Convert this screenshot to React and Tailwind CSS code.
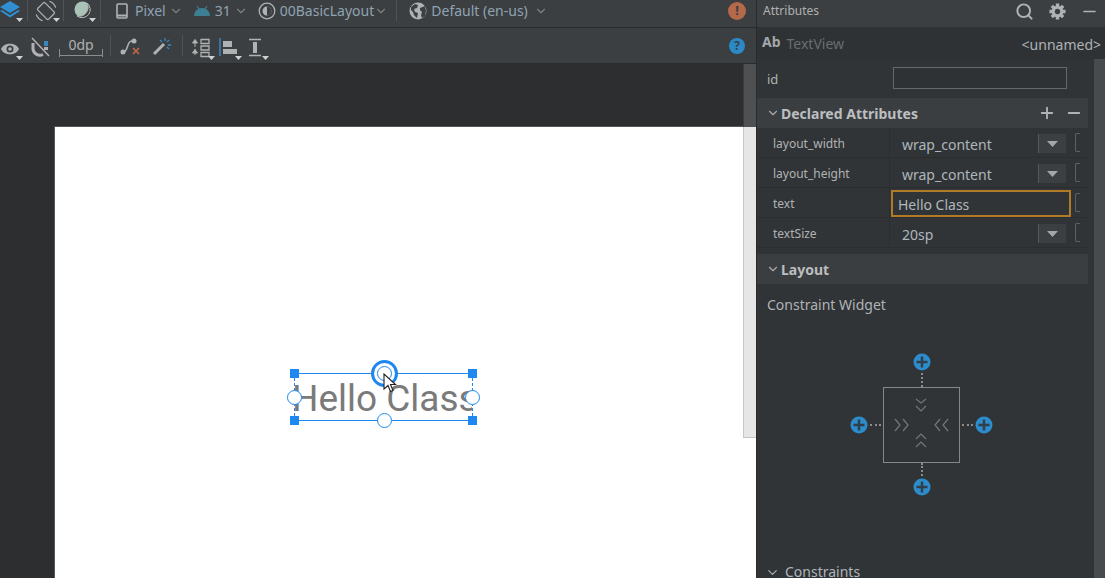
import { ChevronDown, Search, Plus, Minus } from "lucide-react";

const Caret = ({ className = "" }) => (
  <svg width="7" height="4" viewBox="0 0 7 4" className={`absolute ${className}`}>
    <path d="M0 0h7L3.500 4z" fill="#d0d0d0" />
  </svg>
);

const Sep = ({ h = "h-[21px]" }) => <div className={`w-px ${h} bg-[#505354] self-start`} />;

function TopBar() {
  return (
    <div className="h-[28px] bg-[#3c3f41] border-b border-[#2b2b2b] flex items-center relative pb-[6px] text-[14px] text-[#8fa3b3]">
      <div className="w-[27px] h-[27px] relative shrink-0 self-start">
        <svg width="22" height="22" viewBox="0 0 22 22" className="absolute left-0 top-0">
          <path d="M10 1l10 6-10 6L0 7z" fill="#2f8fd0" />
          <path d="M0 11l2-1 8 5 8-5 2 1-10 6.500z" fill="#2f8fd0" />
        </svg>
        <Caret className="left-[16px] top-[18px]" />
      </div>
      <Sep />
      <div className="w-[35px] h-[27px] relative shrink-0 self-start">
        <svg width="22" height="22" viewBox="0 0 26 26" className="absolute left-[7px] top-0" fill="none" stroke="#afb1b3" strokeWidth="1.500">
          <rect x="7" y="4" width="12" height="18" rx="1.500" transform="rotate(-45 13 13)" />
          <path d="M17 1.500a12 12 0 0 1 7.500 7.500M1.500 17a12 12 0 0 0 7.500 7.500" />
        </svg>
        <Caret className="left-[25px] top-[18px]" />
      </div>
      <Sep />
      <div className="w-[36px] h-[27px] relative shrink-0 self-start">
        <svg width="20" height="20" viewBox="0 0 20 20" className="absolute left-[9px] top-0">
          <circle cx="9.500" cy="9.500" r="8" fill="#a9c4b6" />
          <path d="M14 3a8 8 0 0 1-10 13a9 9 0 0 0 10-13z" fill="#3c3f41" stroke="#afb1b3" strokeWidth="1" />
        </svg>
        <Caret className="left-[25px] top-[18px]" />
      </div>
      <Sep />
      <svg width="12" height="16" viewBox="0 0 12 16" className="ml-[15px] shrink-0">
        <rect x="1" y="1" width="10" height="14" rx="1" fill="none" stroke="#afb1b3" strokeWidth="1.600" />
        <path d="M1 12.500h10" stroke="#afb1b3" strokeWidth="2" />
      </svg>
      <span className="ml-[7px] leading-none">Pixel</span>
      <ChevronDown size={14} className="text-[#7c8083] ml-[3px]" />
      <svg width="16" height="10" viewBox="0 0 16 10" className="ml-[11px]">
        <path d="M0 10a8 8 0 0 1 16 0z" fill="#3f7f93" />
        <path d="M3 0l2 3M13 0l-2 3" stroke="#3f7f93" strokeWidth="1.200" />
      </svg>
      <span className="ml-[5px] leading-none">31</span>
      <ChevronDown size={14} className="text-[#7c8083] ml-[3px]" />
      <svg width="18" height="18" viewBox="0 0 18 18" className="ml-[10px]">
        <circle cx="9" cy="9" r="7.800" fill="none" stroke="#afb1b3" strokeWidth="1.300" />
        <circle cx="9" cy="9" r="4.500" fill="#afb1b3" />
        <path d="M9 4.500a4.500 4.500 0 0 1 0 9z" fill="#3c3f41" />
      </svg>
      <span className="ml-[4px] leading-none">00BasicLayout</span>
      <ChevronDown size={14} className="text-[#7c8083]" />
      <div className="ml-[8px] self-start"><Sep /></div>
      <svg width="18" height="18" viewBox="0 0 18 18" className="ml-[12px] shrink-0">
        <circle cx="9" cy="9" r="8.500" fill="#afb1b3" />
        <path d="M2 5l4-3 3 1-1 3-3 1 1 3 3 1-1 5-3-3-1-3-2-2zM11 6l5-2 1 5-1 5-3 2-1-3 1-3-2-2z" fill="#3c3f41" />
      </svg>
      <span className="ml-[4px] leading-none">Default (en-us)</span>
      <ChevronDown size={14} className="text-[#7c8083] ml-[6px]" />
      <div className="ml-auto mr-[10px] w-[18px] h-[18px] rounded-full bg-[#b4694a] text-[#3c3f41] font-bold text-[13px] flex items-center justify-center leading-none">!</div>
    </div>
  );
}

function SecondBar() {
  return (
    <div className="h-[36px] bg-[#3c3f41] border-b border-[#2b2b2b] flex items-center relative pt-[2px] text-[14px] text-[#afb1b3]">
      <div className="w-[24px] h-[35px] relative shrink-0 self-start">
        <svg width="20" height="14" viewBox="0 0 20 14" className="absolute left-0 top-[12px]">
          <path d="M1 7c3-7 15-7 18 0c-3 7-15 7-18 0z" fill="#afb1b3" />
          <circle cx="10" cy="7" r="3.500" fill="#3c3f41" />
          <circle cx="10" cy="7" r="1.800" fill="#afb1b3" />
        </svg>
        <Caret className="left-[16px] top-[26px]" />
      </div>
      <svg width="20" height="20" viewBox="0 0 20 20" className="ml-[7px] shrink-0">
        <path d="M2 6v6a7 7 0 0 0 10 5.500" fill="none" stroke="#afb1b3" strokeWidth="3" />
        <path d="M1 1l17 18" stroke="#afb1b3" strokeWidth="1.500" />
        <path d="M13 4h4v5h-4z" fill="#3a87c0" />
        <path d="M13 10h4v3h-4z" fill="#afb1b3" />
      </svg>
      <div className="ml-[8px] w-[44px] h-[18px] relative shrink-0 text-center leading-[14px] text-[#afb1b3] border-b border-[#8a8d8f]">
        0dp
        <div className="absolute left-0 bottom-[-2px] w-px h-[8px] bg-[#8a8d8f]" />
        <div className="absolute right-0 bottom-[-2px] w-px h-[8px] bg-[#8a8d8f]" />
      </div>
      <div className="ml-[7px] self-start mt-[5px]"><Sep /></div>
      <svg width="22" height="20" viewBox="0 0 22 20" className="ml-[9px] shrink-0">
        <path d="M3 15c6 0 3-11 9-11" fill="none" stroke="#afb1b3" strokeWidth="1.500" />
        <circle cx="3" cy="15" r="2.500" fill="#afb1b3" />
        <circle cx="14" cy="4" r="2.500" fill="#afb1b3" />
        <path d="M13 11l6 6M19 11l-6 6" stroke="#c0694a" strokeWidth="1.700" />
      </svg>
      <svg width="20" height="20" viewBox="0 0 20 20" className="ml-[10px] shrink-0">
        <path d="M2 17L12 7" stroke="#afb1b3" strokeWidth="3" />
        <path d="M13 1v3M17 3l-2 2M19 8h-3M8 3l2 2M17 12l-2-2" stroke="#3a87c0" strokeWidth="1.300" />
      </svg>
      <div className="ml-[10px] self-start mt-[5px]"><Sep /></div>
      <div className="w-[27px] h-[35px] relative ml-[8px] shrink-0 self-start">
        <svg width="20" height="20" viewBox="0 0 20 20" className="absolute left-0 top-[8px]">
          <path d="M4 9V4M1.500 5L4 1.500 6.500 5zM4 11v6M1.500 15L4 11.500 6.500 15z" fill="#afb1b3" stroke="#afb1b3" strokeWidth="1" />
          <path d="M10 1.500h8v4h-8zM10 8h8v4h-8zM10 14.500h8v4h-8z" fill="none" stroke="#afb1b3" strokeWidth="1.300" />
        </svg>
        <Caret className="left-[17px] top-[26px]" />
      </div>
      <div className="w-[30px] h-[35px] relative shrink-0 self-start">
        <svg width="20" height="20" viewBox="0 0 20 20" className="absolute left-[1px] top-[8px]">
          <path d="M1 0v18" stroke="#3a87c0" strokeWidth="1.500" />
          <path d="M4 3h9v6H4z" fill="#afb1b3" />
          <path d="M4 11h14v5H4z" fill="#afb1b3" />
        </svg>
        <Caret className="left-[17px] top-[26px]" />
      </div>
      <div className="w-[24px] h-[35px] relative shrink-0 self-start">
        <svg width="16" height="20" viewBox="0 0 16 20" className="absolute left-0 top-[8px]">
          <path d="M1 1.500h12M1 17.500h12" stroke="#afb1b3" strokeWidth="1.500" />
          <path d="M5 4h4v11H5z" fill="#afb1b3" />
        </svg>
        <Caret className="left-[14px] top-[26px]" />
      </div>
      <div className="absolute right-[11px] top-[10px] w-[16px] h-[16px] rounded-full bg-[#2a8ac8] text-[#3c3f41] font-bold text-[12px] flex items-center justify-center leading-none">?</div>
    </div>
  );
}

const Handle = ({ className }) => (
  <div className={`absolute w-[15px] h-[15px] rounded-full bg-white border border-[#1e88f0] ${className}`} />
);
const Corner = ({ className }) => (
  <div className={`absolute w-[9px] h-[9px] bg-[#1e88f0] ${className}`} />
);

function Canvas() {
  return (
    <div className="flex-1 bg-[#2d2e30] relative overflow-hidden pt-[62px] pl-[54px]">
      <div className="h-[500px] bg-white border-t border-l border-[#55585a] relative">
        {/* selected text view, offsets are relative to the design surface */}
        <div className="absolute left-[239px] top-[246px] w-[178px] h-[48px] border-y border-[#1e88f0] overflow-hidden">
          <div className="absolute left-[-2px] top-[3px] text-[37px] leading-[44px] whitespace-nowrap text-[#7a7a7a] font-['Roboto',sans-serif]">Hello Class</div>
        </div>
        <div className="absolute left-[239px] top-[246px] h-[48px] w-0 border-l border-dashed border-[#1e88f0]" />
        <div className="absolute left-[417px] top-[246px] h-[48px] w-0 border-l border-dashed border-[#1e88f0]" />
        <Corner className="left-[235px] top-[242px]" />
        <Corner className="left-[413px] top-[242px]" />
        <Corner className="left-[235px] top-[289px]" />
        <Corner className="left-[413px] top-[289px]" />
        <Handle className="left-[232px] top-[263px]" />
        <Handle className="left-[410px] top-[263px]" />
        <Handle className="left-[322px] top-[286px]" />
        <div className="absolute left-[316px] top-[233px] w-[27px] h-[27px] rounded-full bg-white border-[3px] border-[#1e88f0] flex items-center justify-center">
          <div className="w-[15px] h-[15px] rounded-full border border-[#1e88f0]" />
        </div>
        <svg width="16" height="22" viewBox="0 0 16 22" className="absolute left-[328px] top-[246px]">
          <path d="M1 1v15l4-3.500 2.500 6 2.500-1-2.500-6h5z" fill="#fff" stroke="#222" strokeWidth="1.100" />
        </svg>
      </div>
      <div className="absolute right-0 top-0 w-[13px] h-[374px] bg-[#4e5052] border-l border-[#3a3c3e]" />
      <div className="absolute right-0 top-[63px] w-[13px] h-[311px] bg-[#e6e6e6] border-l border-b border-[#c6c6c6]" />
    </div>
  );
}

function Row({ name, value, dropdown, focus }) {
  return (
    <div className="h-[30px] border-b border-[#2b2d2f] flex relative">
      <div className="w-[133px] border-r border-[#2b2d2f] pl-[16px] text-[12px] text-[#b0b3b5] leading-[31px] shrink-0">{name}</div>
      {focus ? (
        <div className="w-[180px] h-[27px] mt-[2px] ml-px border-2 border-[#b07a26] pl-[5px] text-[14px] leading-[25px] text-[#b0b8bf] shrink-0">{value}</div>
      ) : (
        <div className="w-[181px] pl-[12px] text-[14px] leading-[34px] text-[#aeb6bc] relative shrink-0">
          {value}
          {dropdown && (
            <div className="absolute left-[148px] top-[6px] w-[28px] h-[19px] bg-[#3c3f41] border-l border-[#55585a] flex items-center justify-center">
              <svg width="11" height="6" viewBox="0 0 11 6"><path d="M0 0h11L5.500 6z" fill="#a4a7a9" /></svg>
            </div>
          )}
        </div>
      )}
      <div className="ml-[4px] mt-[5px] w-[5px] h-[19px] border border-[#5d6062] rounded-l-[2px] border-r-0" />
    </div>
  );
}

const SectionHead = ({ title, children }) => (
  <div className="h-[30px] bg-[#3b3e40] flex items-center pl-[9px] text-[14px] font-bold text-[#bcbec0]">
    <ChevronDown size={14} className="text-[#a8abad] mr-px" />
    {title}
    {children}
  </div>
);

const PlusDot = () => (
  <svg width="18" height="18" viewBox="0 0 18 18" className="shrink-0">
    <circle cx="9" cy="9" r="8.500" fill="#2d8ccb" />
    <path d="M9 3.500v11M3.500 9h11" stroke="#313f4b" strokeWidth="2.500" />
  </svg>
);

function ConstraintWidget() {
  return (
    <div className="w-[143px] flex flex-col items-center mt-[38px] ml-[93px]">
      <PlusDot />
      <div className="h-[14px] w-0 border-l-2 border-dotted border-[#8a8d8f] mt-[2px]" />
      <div className="flex items-center">
        <PlusDot />
        <div className="w-[11px] h-0 border-t-2 border-dotted border-[#8a8d8f] mx-[2px]" />
        <div className="w-[77px] h-[76px] border border-[#85888a] shrink-0">
          <svg width="75" height="74" viewBox="0 0 75 74" fill="none" stroke="#74777a" strokeWidth="1.200">
            <path d="M32 11l5 4 5-4M32 18l5 5 5-5" />
            <path d="M32 51l5-5 5 5M32 59l5-5 5 5" />
            <path d="M11 31l5 6-5 6M19 31l5 6-5 6" />
            <path d="M64 31l-5 6 5 6M56 31l-5 6 5 6" />
          </svg>
        </div>
        <div className="w-[11px] h-0 border-t-2 border-dotted border-[#8a8d8f] mx-[2px]" />
        <PlusDot />
      </div>
      <div className="h-[13px] w-0 border-l-2 border-dotted border-[#8a8d8f] mb-[2px]" />
      <PlusDot />
    </div>
  );
}

const Gear = () => (
  <svg width="17" height="17" viewBox="0 0 18 18" className="ml-[15px] shrink-0">
    <g stroke="#afb1b3" strokeWidth="3.600">
      <path d="M9 0.500v17M0.500 9h17M3 3l12 12M15 3L3 15" />
    </g>
    <circle cx="9" cy="9" r="6.200" fill="#afb1b3" />
    <circle cx="9" cy="9" r="2.800" fill="#3c3f41" />
  </svg>
);

function AttributesPanel() {
  return (
    <div className="w-[349px] shrink-0 bg-[#303436] border-l border-[#2b2b2b] relative h-[578px] overflow-hidden">
      <div className="h-[27px] bg-[#3c3f41] flex items-center pl-[6px] pr-[6px] pb-[5px] text-[12px] text-[#afb1b3]">
        Attributes
        <Search size={19} strokeWidth={2.500} className="ml-auto" />
        <Gear />
        <Minus size={19} strokeWidth={2} className="ml-[14px]" />
      </div>
      <div className="h-[32px] flex items-center pl-[5px] pr-[4px] text-[14px] bg-[#2f3234]">
        <span className="font-bold text-[#a4a7a9] mr-[6px] -mt-[3px]">Ab</span>
        <span className="text-[#696d70]">TextView</span>
        <span className="ml-auto text-[14px] mt-[3px] text-[#aeb3b7]">&lt;unnamed&gt;</span>
      </div>
      <div className="h-[39px] flex items-center pl-[10px]">
        <span className="w-[126px] text-[13px] mt-[3px] text-[#b0b3b5]">id</span>
        <div className="w-[174px] h-[22px] -mt-px bg-[#2f3234] border border-[#66696b]" />
      </div>
      <div className="w-[331px]">
        <SectionHead title="Declared Attributes">
          <Plus size={18} strokeWidth={2.500} className="ml-auto text-[#b0b3b5]" />
          <Minus size={18} strokeWidth={2.500} className="ml-[9px] mr-[5px] text-[#b0b3b5]" />
        </SectionHead>
        <Row name="layout_width" value="wrap_content" dropdown />
        <Row name="layout_height" value="wrap_content" dropdown />
        <Row name="text" value="Hello Class" focus />
        <Row name="textSize" value="20sp" dropdown />
        <div className="h-[6px]" />
        <SectionHead title="Layout" />
        <div className="pl-[10px] mt-[11px] text-[14px] leading-[20px] text-[#aeb3b7]">Constraint Widget</div>
        <ConstraintWidget />
      </div>
      <div className="absolute left-[8px] top-[562px] flex items-center text-[14px] text-[#aeb6bc] leading-[20px]">
        <ChevronDown size={15} className="mr-[5px] text-[#a8abad]" />
        Constraints
      </div>
      <div className="absolute right-0 top-[59px] w-[11px] h-[519px] bg-[#484b4d]" />
    </div>
  );
}

export default function App() {
  return (
    <div className="w-[1105px] h-[578px] flex overflow-hidden font-['Noto_Sans',sans-serif]">
      <div className="w-[756px] shrink-0 flex flex-col">
        <TopBar />
        <SecondBar />
        <Canvas />
      </div>
      <AttributesPanel />
    </div>
  );
}
